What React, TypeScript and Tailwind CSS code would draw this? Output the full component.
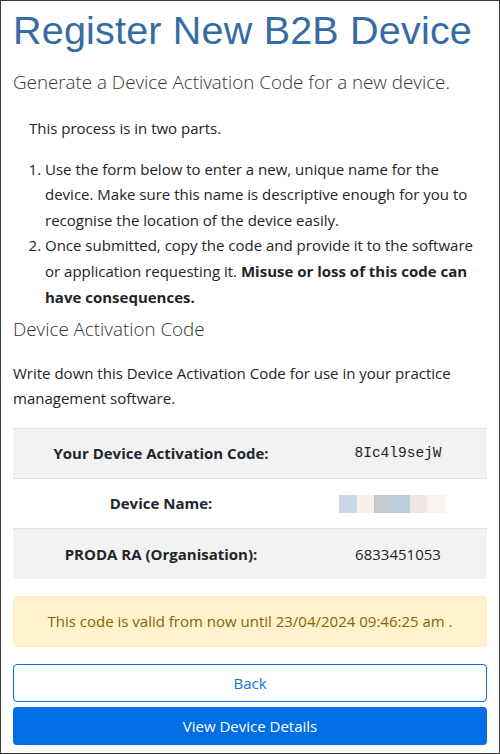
import React from "react";

const sans = { fontFamily: '"Open Sans", "Noto Sans", sans-serif' };

export default function App() {
  return (
    <div
      className="w-[500px] h-[754px] border border-[#3c3c3c] bg-white overflow-hidden px-[12px] text-[#212529]"
      style={sans}
    >
      <h1
        className="text-[39.5px] leading-[46px] text-[#366ca3] mt-[6px] tracking-[0.2px]"
        style={{ fontFamily: '"Liberation Sans", Arial, sans-serif' }}
      >
        Register New B2B Device
      </h1>
      <p className="mt-[16px] text-[18.8px] leading-[26px] font-light text-[#333]">
        Generate a Device Activation Code for a new device.
      </p>
      <div className="pl-[16px] mt-[21px] text-[15px] leading-[25.6px]">
        <p>This process is in two parts.</p>
        <ol className="mt-[15px] list-decimal pl-[16px]">
          <li>
            Use the form below to enter a new, unique name for the device. Make sure this name is descriptive enough for you to recognise the location of the device easily.
          </li>
          <li>
            Once submitted, copy the code and provide it to the software or application requesting it.{" "}
            <b className="font-bold">Misuse or loss of this code can have consequences.</b>
          </li>
        </ol>
      </div>
      <h2 className="mt-[6px] text-[18.8px] leading-[26px] font-light text-[#333]">Device Activation Code</h2>
      <p className="mt-[19px] text-[15px] leading-[25px]">
        Write down this Device Activation Code for use in your practice management software.
      </p>
      <div className="mt-[17px] border-t border-[#dee2e6] text-[15px]">
        <div className="grid grid-cols-[296px_1fr] h-[50px] items-center bg-[#f2f2f2] border-b border-[#dee2e6]">
          <div className="text-center font-bold">Your Device Activation Code:</div>
          <div
            className="text-center text-[14.5px]"
            style={{ fontFamily: '"Liberation Mono", monospace' }}
          >
            8Ic4l9sejW
          </div>
        </div>
        <div className="grid grid-cols-[296px_1fr] h-[50px] items-center bg-white border-b border-[#dee2e6]">
          <div className="text-center font-bold">Device Name:</div>
          <div className="flex justify-center pr-[12px]">
            <div className="flex h-[18px]">
              <span className="w-[18px] bg-[#cbd7e4]" />
              <span className="w-[17px] bg-[#f7efea]" />
              <span className="w-[18px] bg-[#c3cbd1]" />
              <span className="w-[18px] bg-[#bccdd8]" />
              <span className="w-[17px] bg-[#efe7e6]" />
              <span className="w-[18px] bg-[#f8f3f0]" />
            </div>
          </div>
        </div>
        <div className="grid grid-cols-[296px_1fr] h-[50px] items-center bg-[#f2f2f2]">
          <div className="text-center font-bold">PRODA RA (Organisation):</div>
          <div className="text-center">6833451053</div>
        </div>
      </div>
      <div className="mt-[17px] h-[51px] flex items-center justify-center rounded-[4px] bg-[#fff3cd] border border-[#ffeeba] text-[#856404] text-[15px]">
        This code is valid from now until 23/04/2024 09:46:25 am .
      </div>
      <button className="mt-[17px] w-full h-[38px] rounded-[4px] border border-[#0a6fe0] text-[#0a6fe0] bg-white text-[15px]">
        Back
      </button>
      <button className="mt-[5px] w-full h-[38px] rounded-[4px] bg-[#006fe6] text-white text-[15px]">
        View Device Details
      </button>
    </div>
  );
}
